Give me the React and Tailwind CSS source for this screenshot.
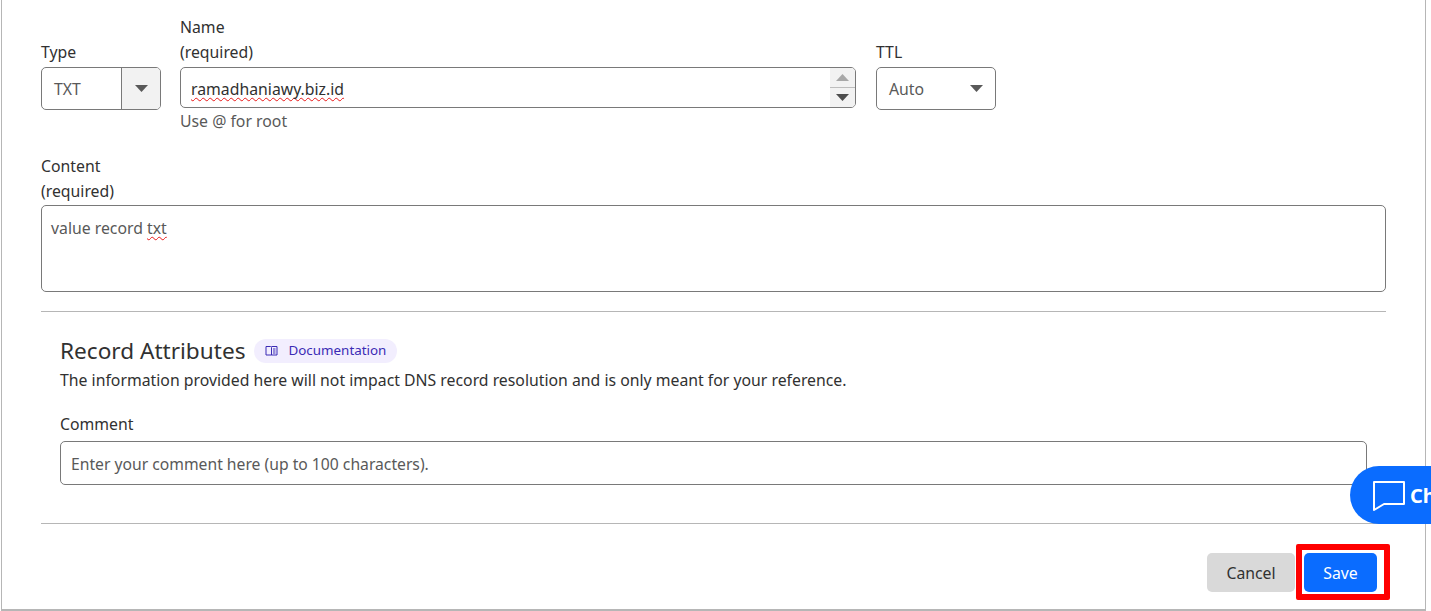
import React from 'react';

const font = 'font-["Noto_Sans",sans-serif]';
const spellCheck = 'underline decoration-[#e81818] decoration-wavy decoration-1 underline-offset-2 [text-decoration-skip-ink:none]';

const Caret = ({ className = '' }) => (
  <svg width="13" height="7" viewBox="0 0 13 7" className={className}>
    <path d="M0 0h13L6.5 7z" fill="currentColor" />
  </svg>
);

const App = () => {
  return (
    <div className={`${font} relative h-[611px] w-[1431px] overflow-hidden bg-white text-[15.8px] leading-[25px] text-[#313131]`}>
      <div className="ml-[1px] h-[611px] w-[1425px] border-r border-b-2 border-l border-[#b6b6b6] pt-[15px] pr-[38px] pl-[39px]">
        <div className="flex items-start">
          <div className="mt-[25px] w-[120px]">
            <label className="mb-[2px] block">Type</label>
            <div className="flex h-[43px] overflow-hidden rounded-[5px] border border-[#797979] text-[#595959]">
              <span className="flex-1 pl-[12px] leading-[43px]">TXT</span>
              <span className="flex w-[39px] items-center justify-center border-l border-[#797979] bg-[#f2f2f2] text-[#595959]">
                <Caret />
              </span>
            </div>
          </div>
          <div className="ml-[19px] w-[676px]">
            <label className="mb-[2px] block">Name<br />(required)</label>
            <div className="flex h-[41px] overflow-hidden rounded-[5px] border border-[#797979]">
              <span className="flex-1 pl-[10px] leading-[43px]">
                <span className={spellCheck}>ramadhaniawy.biz.id</span>
              </span>
              <span className="flex w-[25px] flex-col items-center bg-[#f2f2f2]">
                <span className="flex h-[20px] w-full items-center justify-center border-b border-[#bdbdbd] text-[#a8a8a8]">
                  <Caret className="rotate-180" />
                </span>
                <span className="flex flex-1 items-center justify-center text-[#4d4d4d]">
                  <Caret />
                </span>
              </span>
            </div>
            <p className="mt-[1px] text-[#595959]">Use @ for root</p>
          </div>
          <div className="mt-[25px] ml-[20px] w-[120px]">
            <label className="mb-[2px] block">TTL</label>
            <div className="flex h-[43px] items-center justify-between rounded-[5px] border border-[#797979] pr-[12px] pl-[12px] text-[#595959]">
              <span className="pt-[2px]">Auto</span>
              <Caret />
            </div>
          </div>
        </div>

        <div className="mt-[20px]">
          <label className="mb-[1px] block">Content<br />(required)</label>
          <div className="h-[87px] w-[1345px] rounded-[5px] border border-[#797979] px-[9px] pt-[10px] text-[#595959]">
            value record <span className={spellCheck}>txt</span>
          </div>
        </div>

        <div className="mt-[19px] w-[1345px] border-t border-[#b6b6b6] px-[19px] pt-[22px]">
          <div className="flex h-[34px] items-center">
            <h2 className="text-[22.6px] leading-[32px] text-[#313131]">Record Attributes</h2>
            <a className="ml-[9px] flex h-[24px] items-center rounded-full bg-[#f2eefe] px-[11px] pb-[2px] text-[13.4px] text-[#3b2bb5]">
              <svg width="13" height="12" viewBox="0 0 13 12" fill="none" stroke="currentColor" className="mt-[2px] mr-[10px]">
                <path d="M1 1.5h4.5a1 1 0 0 1 1 1V10H1zM6.5 1.5H12V10H6.5M8 4h2.5M8 6h2.5M8 8h2.5" />
              </svg>
              Documentation
            </a>
          </div>
          <p>The information provided here will not impact DNS record resolution and is only meant for your reference.</p>
          <label className="mt-[19px] block">Comment</label>
          <div className="mt-[4px] h-[44px] w-[1307px] rounded-[5px] border border-[#797979] px-[10px] text-[15.7px] leading-[44px] text-[#595959]">
            Enter your comment here (up to 100 characters).
          </div>
        </div>

        <div className="mt-[38px] flex w-[1345px] justify-end border-t border-[#b6b6b6] pt-[29px] pr-[9px]">
          <button className="h-[39px] w-[88px] rounded-[5px] bg-[#d9d9d9] pt-[2px] text-[#313131]">Cancel</button>
          <button className="ml-[9px] h-[39px] w-[73px] rounded-[5px] bg-[#0a6cff] pt-[2px] text-white">Save</button>
        </div>
      </div>

      {/* red annotation box round the Save button */}
      <div className="absolute top-[544px] left-[1296px] h-[56px] w-[94px] rounded-[2px] border-[6px] border-[#ff0000]" />

      {/* chat widget floats over the form */}
      <div className="absolute top-[466px] left-[1350px] flex h-[58px] w-[100px] items-center rounded-l-[29px] bg-[#0a6cff] pl-[23px] text-white">
        <svg width="32" height="30" viewBox="0 0 32 30" fill="none" stroke="currentColor" strokeWidth="2" className="mt-[1px] shrink-0">
          <path d="M1 1h30v22H11l-10 6z" strokeLinejoin="round" />
        </svg>
        <span className="ml-[5px] text-[20px] font-bold">Chat</span>
      </div>
    </div>
  );
};

export default App;
